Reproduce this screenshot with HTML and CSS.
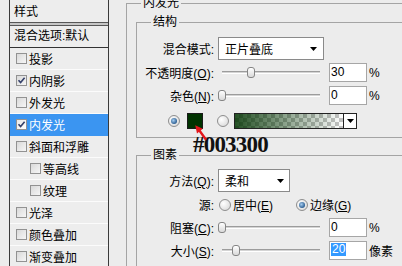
FILE: index.html
```html
<!DOCTYPE html>
<html lang="zh">
<head>
<meta charset="utf-8">
<title>图层样式 - 内发光</title>
<link rel="stylesheet" href="styles.css">
</head>
<body>
<div class="dialog">
  <div class="style-list">
    <div class="list-head">样式</div>
    <div class="list-sep"></div>
    <div class="list-blend">混合选项:默认</div>
    <div class="list-row"><span class="cb"></span>投影</div>
    <div class="list-row"><span class="cb"><svg viewBox="0 0 9 9"><path d="M1.5 4.3 L3.6 6.6 L7.6 1.8"/></svg></span>内阴影</div>
    <div class="list-row"><span class="cb"></span>外发光</div>
    <div class="list-row active"><span class="cb"><svg viewBox="0 0 9 9"><path d="M1.5 4.3 L3.6 6.6 L7.6 1.8"/></svg></span>内发光</div>
    <div class="list-row"><span class="cb"></span>斜面和浮雕</div>
    <div class="list-row sub"><span class="cb"></span>等高线</div>
    <div class="list-row sub"><span class="cb"></span>纹理</div>
    <div class="list-row"><span class="cb"></span>光泽</div>
    <div class="list-row"><span class="cb"></span>颜色叠加</div>
    <div class="list-row"><span class="cb"></span>渐变叠加</div>
  </div>

  <div class="settings">
    <fieldset class="group">
      <legend>内发光</legend>
      <div class="outer-body">
        <fieldset class="group">
          <legend>结构</legend>
          <div class="body struct">
            <div class="row r-tall">
              <span class="lbl">混合模式:</span>
              <div class="select w-blend"><span>正片叠底</span><svg class="caret" viewBox="0 0 7 4"><polygon points="0,0 7,0 3.5,4"/></svg></div>
            </div>
            <div class="row">
              <span class="lbl">不透明度(<u>O</u>):</span>
              <div class="slider"><span class="thumb" style="left: 29px"></span></div>
              <div class="num">30</div><span class="unit">%</span>
            </div>
            <div class="row">
              <span class="lbl">杂色(<u>N</u>):</span>
              <div class="slider"><span class="thumb" style="left: 0px"></span></div>
              <div class="num">0</div><span class="unit">%</span>
            </div>
            <div class="row r-color">
              <span class="radio on"></span>
              <span class="swatch"></span>
              <span class="radio r2"></span>
              <div class="grad"><span class="grad-bar"></span><span class="grad-btn"><svg class="caret" viewBox="0 0 7 4"><polygon points="0,0 7,0 3.5,4"/></svg></span></div>
            </div>
          </div>
        </fieldset>

        <fieldset class="group elements">
          <legend>图素</legend>
          <div class="body">
            <div class="row r-tall">
              <span class="lbl">方法(<u>Q</u>):</span>
              <div class="select w-method"><span>柔和</span><svg class="caret" viewBox="0 0 7 4"><polygon points="0,0 7,0 3.5,4"/></svg></div>
            </div>
            <div class="row">
              <span class="lbl">源:</span>
              <span class="opt first"><span class="radio"></span><span>居中(<u>E</u>)</span></span>
              <span class="opt"><span class="radio on"></span><span>边缘(<u>G</u>)</span></span>
            </div>
            <div class="row">
              <span class="lbl">阻塞(<u>C</u>):</span>
              <div class="slider"><span class="thumb" style="left: 0px"></span></div>
              <div class="num">0</div><span class="unit">%</span>
            </div>
            <div class="row">
              <span class="lbl">大小(<u>S</u>):</span>
              <div class="slider"><span class="thumb" style="left: 14px"></span></div>
              <div class="num"><span class="sel">20</span></div><span class="unit">像素</span>
            </div>
          </div>
        </fieldset>
      </div>
    </fieldset>

    <div class="note">#003300</div>
    <svg class="pointer" viewBox="0 0 20 20">
      <line x1="9.6" y1="8.8" x2="15.5" y2="17"/>
      <polygon points="5.2,3.2 12.8,6.8 7,11.4"/>
    </svg>
  </div>
</div>
</body>
</html>
```

FILE: styles.css
```css
html, body {
  margin: 0;
  padding: 0;
}

body {
  width: 402px;
  height: 266px;
  overflow: hidden;
  background: #ececec;
  font-family: "Liberation Sans", "Noto Sans CJK SC", sans-serif;
  font-size: 12px;
  color: #000;
}

.dialog {
  display: flex;
  align-items: flex-start;
  height: 266px;
  padding-left: 9px;
}

/* ---------- left style list ---------- */
.style-list {
  flex: none;
  width: 100px;
  height: 266px;
  box-sizing: border-box;
  border-left: 1px solid #3a3a3a;
  border-right: 1px solid #3a3a3a;
  background: #ededed;
}

.list-head {
  height: 20px;
  padding-top: 2px;
  line-height: 20px;
  padding-left: 4px;
}

.list-sep {
  height: 2px;
  border-top: 1px solid #575757;
  border-bottom: 1px solid #575757;
  background: #c6c6c6;
}

.list-blend {
  height: 21px;
  line-height: 21px;
  padding-left: 4px;
  border-bottom: 1px solid #333;
  white-space: nowrap;
}

.list-row {
  height: 21px;
  display: flex;
  align-items: center;
  padding-left: 6px;
  border-bottom: 1px solid #fbfbfb;
  white-space: nowrap;
}

.list-row.sub {
  padding-left: 20px;
}

.list-row.active {
  background: #3b95f1;
  color: #fff;
  border-bottom-color: #3b95f1;
}

.cb {
  flex: none;
  width: 11px;
  height: 11px;
  box-sizing: border-box;
  border: 1px solid #929292;
  background: linear-gradient(135deg, #d9d9d9, #f6f6f6);
  margin-right: 2px;
  display: flex;
}

.active .cb {
  background: linear-gradient(135deg, #e8e8e8, #ffffff);
}

.cb svg {
  width: 9px;
  height: 9px;
}

.cb path {
  fill: none;
  stroke: #34406a;
  stroke-width: 1.6;
}

/* ---------- right settings ---------- */
.settings {
  position: relative;
  flex: none;
  width: 330px;
  margin-left: 17px;
}

fieldset.group {
  margin: 0;
  padding: 0;
  min-width: 0;
  border: 1px solid #a4a4a4;
}

legend {
  margin-left: 14px;
  padding: 0 2px;
  line-height: 7px;
  font-size: 12px;
  white-space: nowrap;
}

.outer-body {
  padding: 12px 0 0 9px;
}

.elements {
  margin-top: 14px !important;
}

.body {
  display: flex;
  flex-direction: column;
  gap: 2px;
  padding: 10px 0 6px;
}

.body.struct {
  padding: 11px 0 3px;
}

.row {
  display: flex;
  align-items: center;
  height: 21px;
  white-space: nowrap;
}

.row.r-tall {
  height: 23px;
}

.row.r-color {
  height: 26px;
  padding-left: 31px;
}

.lbl {
  flex: none;
  width: 77px;
  margin-right: 4px;
  text-align: right;
}

u {
  text-decoration: underline;
  text-underline-offset: 1px;
}

.select {
  flex: none;
  height: 23px;
  box-sizing: border-box;
  border: 1px solid #8a8a8a;
  background: #fff;
  display: flex;
  align-items: center;
  padding-left: 6px;
}

.w-blend {
  width: 106px;
}

.w-method {
  width: 72px;
}

.select .caret {
  margin-left: auto;
  margin-right: 6px;
}

.w-method .caret {
  margin-right: 5px;
}

.caret {
  width: 7px;
  height: 4px;
  flex: none;
}

.caret polygon {
  fill: #000;
}

.slider {
  flex: none;
  position: relative;
  width: 106px;
  height: 21px;
}

.slider::before {
  content: "";
  position: absolute;
  left: 4px;
  right: 4px;
  top: 9px;
  height: 1px;
  border-top: 1px solid #9c9c9c;
  border-bottom: 1px solid #ffffff;
  background: #d4d4d4;
}

.thumb {
  position: absolute;
  top: 5px;
  width: 8px;
  height: 11px;
  box-sizing: border-box;
  border: 1px solid #858585;
  border-radius: 3px;
  background: linear-gradient(#ffffff, #d9d9d9);
}

.num {
  flex: none;
  width: 38px;
  height: 19px;
  box-sizing: border-box;
  border: 1px solid #a6a6a6;
  background: #fff;
  margin-left: 5px;
  padding-left: 1px;
  line-height: 17px;
}

.sel {
  display: inline-block;
  background: #3399ff;
  color: #fff;
  line-height: 13px;
  padding: 0 1px;
  vertical-align: 1px;
}

.unit {
  margin-left: 2px;
}

.radio {
  flex: none;
  position: relative;
  width: 12px;
  height: 12px;
  box-sizing: border-box;
  border-radius: 50%;
  border: 1px solid #8e8e8e;
  background: radial-gradient(circle at 35% 35%, #ffffff, #d4d4d4);
}

.radio.on::after {
  content: "";
  position: absolute;
  left: 2px;
  top: 2px;
  width: 6px;
  height: 6px;
  border-radius: 50%;
  background: radial-gradient(circle at 40% 40%, #a6cdf0, #24578c 75%);
}

.swatch {
  flex: none;
  width: 16px;
  height: 16px;
  box-sizing: border-box;
  border: 1px solid #1a1a1a;
  background: #003300;
  margin-left: 7px;
}

.radio.r2 {
  margin-left: 14px;
}

.grad {
  display: flex;
  height: 16px;
  margin-left: 5px;
}

.grad-bar {
  width: 110px;
  box-sizing: border-box;
  border: 1px solid #222;
  background:
    linear-gradient(to right, rgba(0, 51, 0, 0.85), rgba(0, 51, 0, 0)),
    repeating-conic-gradient(#c4c4c4 0 25%, #ffffff 0 50%) 0 0 / 8px 8px;
}

.grad-btn {
  width: 13px;
  box-sizing: border-box;
  border: 1px solid #222;
  border-left: none;
  background: #fff;
  display: flex;
  align-items: center;
  justify-content: center;
}

.opt {
  display: flex;
  align-items: center;
  gap: 2px;
}

.opt.first {
  width: 77px;
  margin-left: 1px;
}

/* annotation overlay */
.note {
  position: absolute;
  left: 67px;
  top: 133px;
  font-family: "Liberation Serif", serif;
  font-weight: bold;
  font-size: 23px;
  line-height: 23px;
  letter-spacing: -0.8px;
  color: #111;
  white-space: nowrap;
}

.pointer {
  position: absolute;
  left: 64px;
  top: 122px;
  width: 20px;
  height: 20px;
  overflow: visible;
}

.pointer line {
  stroke: #e3161c;
  stroke-width: 2.4;
  stroke-linecap: round;
}

.pointer polygon {
  fill: #e3161c;
}
```
